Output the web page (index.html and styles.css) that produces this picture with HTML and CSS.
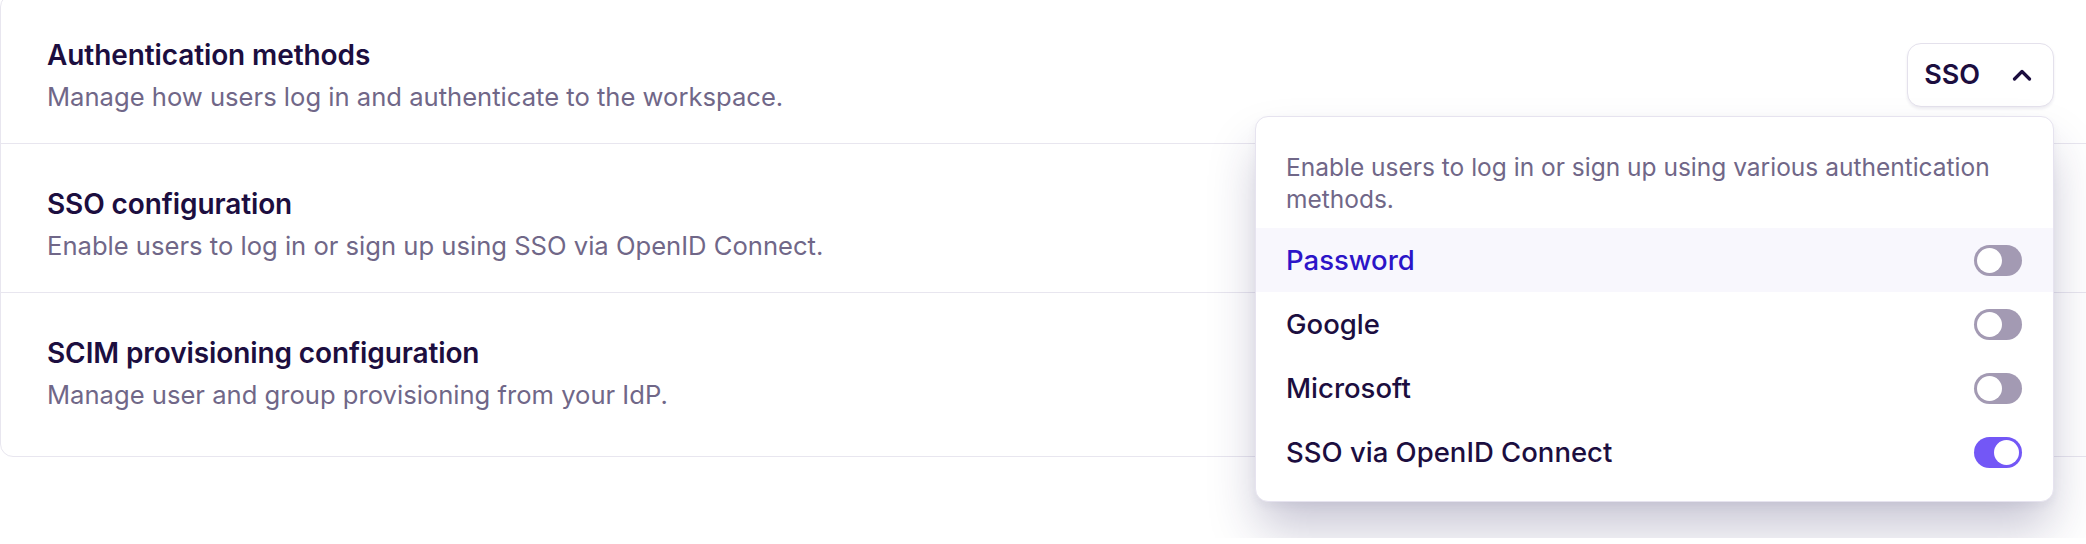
FILE: index.html
```html
<!DOCTYPE html>
<html lang="en">
<head>
<meta charset="utf-8">
<title>Authentication settings</title>
<link rel="stylesheet" href="styles.css">
</head>
<body>
<div class="page">
  <section class="card">
    <div class="row">
      <div class="row-text">
        <h2 class="row-title">Authentication methods</h2>
        <p class="row-desc">Manage how users log in and authenticate to the workspace.</p>
      </div>
      <button class="select-btn" type="button">
        <span class="select-label">SSO</span>
        <svg class="chevron" viewBox="0 0 20 12" width="20" height="12" aria-hidden="true"><path d="M2.5 10 L10 2.5 L17.5 10" fill="none" stroke="currentColor" stroke-width="3.2" stroke-linecap="round" stroke-linejoin="round"/></svg>
      </button>
    </div>
    <div class="row">
      <div class="row-text">
        <h2 class="row-title">SSO configuration</h2>
        <p class="row-desc">Enable users to log in or sign up using SSO via OpenID Connect.</p>
      </div>
    </div>
    <div class="row">
      <div class="row-text">
        <h2 class="row-title">SCIM provisioning configuration</h2>
        <p class="row-desc">Manage user and group provisioning from your IdP.</p>
      </div>
    </div>
  </section>

  <div class="dropdown">
    <p class="dropdown-intro">Enable users to log in or sign up using various authentication methods.</p>
    <ul class="option-list">
      <li class="option option-active"><span class="option-label">Password</span><span class="toggle"><span class="knob"></span></span></li>
      <li class="option"><span class="option-label">Google</span><span class="toggle"><span class="knob"></span></span></li>
      <li class="option"><span class="option-label">Microsoft</span><span class="toggle"><span class="knob"></span></span></li>
      <li class="option"><span class="option-label">SSO via OpenID Connect</span><span class="toggle toggle-on"><span class="knob"></span></span></li>
    </ul>
  </div>
</div>
</body>
</html>
```

FILE: styles.css
```css
html, body {
  margin: 0;
  padding: 0;
  background: #ffffff;
  overflow: hidden;
}

body {
  font-family: Inter, "Noto Sans", "Liberation Sans", sans-serif;
  color: #1c0e3f;
  -webkit-font-smoothing: antialiased;
}

.page {
  position: relative;
  height: 544px;
}

.card {
  margin-top: -6px;
  margin-right: -20px;
  border: 1px solid #e8e6ef;
  border-radius: 13px;
  padding-bottom: 15px;
  background: #ffffff;
}

.row {
  display: flex;
  align-items: center;
  justify-content: space-between;
  padding: 44px 51px 30px 46px;
  border-top: 1px solid #e8e6ef;
}

.row:first-child {
  border-top: none;
}

.row-title {
  margin: 0 0 10px;
  font-size: 28px;
  line-height: 32px;
  font-weight: 600;
  color: #1c0e3f;
  letter-spacing: -0.1px;
}

.row-desc {
  margin: 0;
  font-size: 25.6px;
  line-height: 32px;
  font-weight: 400;
  color: #706788;
}

.select-btn {
  display: flex;
  align-items: center;
  gap: 32px;
  height: 64px;
  padding: 0 21px 0 16px;
  border: 1.5px solid #e4e1ec;
  border-radius: 14px;
  background: #ffffff;
  box-shadow: 0 2px 3px rgba(40, 30, 90, 0.08);
  font-family: inherit;
  color: #1c0e3f;
  cursor: pointer;
  margin-top: -2px;
}

.select-label {
  font-size: 27px;
  font-weight: 600;
  line-height: 32px;
}

.chevron {
  display: block;
  color: #1c0e3f;
}

.dropdown {
  position: absolute;
  top: 122px;
  right: 32px;
  width: 797px;
  border: 1px solid #e6e3ef;
  border-radius: 13px;
  background: #ffffff;
  padding: 34px 0 17px;
  box-shadow: 0 30px 50px -4px rgba(40, 30, 90, 0.26), 0 4px 10px rgba(40, 30, 90, 0.05);
}

.dropdown-intro {
  margin: 0 0 13px;
  padding: 0 31px 0 30px;
  font-size: 24.5px;
  line-height: 32px;
  color: #706788;
}

.option-list {
  list-style: none;
  margin: 0;
  padding: 0;
}

.option {
  display: flex;
  align-items: center;
  justify-content: space-between;
  height: 64px;
  padding: 0 31px 0 30px;
}

.option-active {
  background: #f8f7fd;
}

.option-label {
  font-size: 27.5px;
  line-height: 32px;
  font-weight: 500;
  color: #1c0e3f;
}

.option-active .option-label {
  color: #2c14c8;
}

.toggle {
  position: relative;
  width: 48px;
  height: 31px;
  border-radius: 16px;
  background: #a39ab3;
}

.toggle-on {
  background: #7357f6;
}

.knob {
  position: absolute;
  top: 3px;
  left: 3px;
  width: 25px;
  height: 25px;
  border-radius: 50%;
  background: #ffffff;
}

.toggle-on .knob {
  left: 20px;
}
```
